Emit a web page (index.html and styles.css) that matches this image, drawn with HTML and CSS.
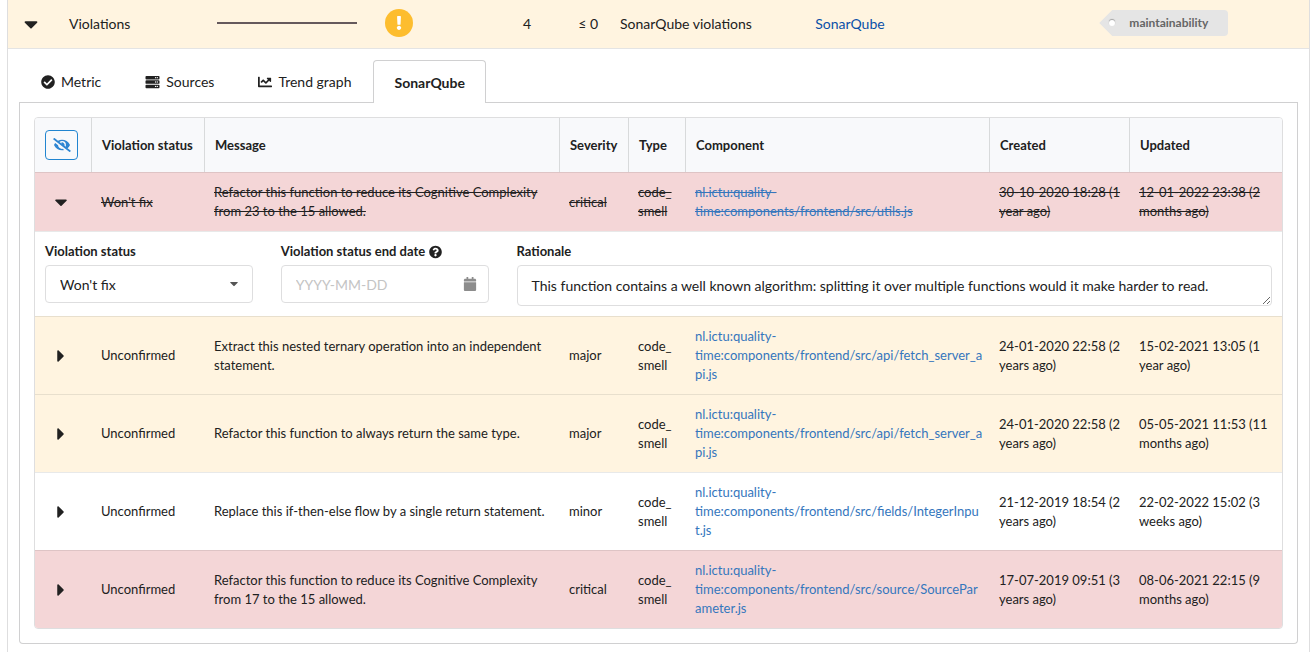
FILE: index.html
```
<!DOCTYPE html>
<html lang="en">

<head>
    <meta charset="UTF-8" />
    <meta name="viewport" content="width=device-width, initial-scale=1.0" />
    <title>Violations - SonarQube</title>
    <link rel="stylesheet" href="styles.css">
</head>

<body>
    <!-- Icon shapes, referenced with <use> below -->
    <svg class="sprite" aria-hidden="true">
        <symbol id="caret-down" viewBox="0 0 320 512"><path d="M31.3 192h257.3c17.8 0 26.7 21.5 14.1 34.1L174.1 354.8c-7.8 7.8-20.5 7.8-28.3 0L17.2 226.1C4.6 213.5 13.5 192 31.3 192z" /></symbol>
        <symbol id="caret-right" viewBox="0 0 192 512"><path d="M0 384.662V127.338c0-17.818 21.543-26.741 33.941-14.142l128.322 128.662c7.81 7.81 7.81 20.474 0 28.284L33.941 398.804C21.543 411.404 0 402.48 0 384.662z" /></symbol>
        <symbol id="check-circle" viewBox="0 0 512 512"><path d="M504 256c0 136.967-111.033 248-248 248S8 392.967 8 256 119.033 8 256 8s248 111.033 248 248zM227.314 387.314l184-184c6.248-6.248 6.248-16.379 0-22.627l-22.627-22.627c-6.248-6.249-16.379-6.249-22.628 0L216 308.118l-70.059-70.059c-6.248-6.248-16.379-6.248-22.628 0l-22.627 22.627c-6.248 6.248-6.248 16.379 0 22.627l104 104c6.249 6.249 16.379 6.249 22.628.001z" /></symbol>
        <symbol id="server" viewBox="0 0 512 512">
            <path fill-rule="evenodd" d="M32 32h448a32 32 0 0 1 32 32v64a32 32 0 0 1-32 32H32a32 32 0 0 1-32-32V64a32 32 0 0 1 32-32zM432 72a24 24 0 1 0 0 48 24 24 0 0 0 0-48zM368 72a24 24 0 1 0 0 48 24 24 0 0 0 0-48z" />
            <path fill-rule="evenodd" d="M32 192h448a32 32 0 0 1 32 32v64a32 32 0 0 1-32 32H32a32 32 0 0 1-32-32v-64a32 32 0 0 1 32-32zM432 232a24 24 0 1 0 0 48 24 24 0 0 0 0-48zM368 232a24 24 0 1 0 0 48 24 24 0 0 0 0-48z" />
            <path fill-rule="evenodd" d="M32 352h448a32 32 0 0 1 32 32v64a32 32 0 0 1-32 32H32a32 32 0 0 1-32-32v-64a32 32 0 0 1 32-32zM432 392a24 24 0 1 0 0 48 24 24 0 0 0 0-48zM368 392a24 24 0 1 0 0 48 24 24 0 0 0 0-48z" />
        </symbol>
        <symbol id="chart-line" viewBox="0 0 512 512"><path d="M496 384H64V80c0-8.84-7.16-16-16-16H16C7.16 64 0 71.16 0 80v336c0 17.67 14.33 32 32 32h464c8.84 0 16-7.16 16-16v-32c0-8.84-7.16-16-16-16zM464 96H345.94c-21.38 0-32.09 25.85-16.97 40.97l32.4 32.4L288 242.75l-73.37-73.37c-12.5-12.5-32.76-12.5-45.25 0l-68.69 68.69c-6.25 6.25-6.25 16.38 0 22.63l22.62 22.62c6.25 6.25 16.38 6.25 22.63 0L192 237.25l73.37 73.37c12.5 12.5 32.76 12.5 45.25 0l96-96 32.4 32.4c15.12 15.12 40.97 4.41 40.97-16.97V112c.01-8.84-7.15-16-15.99-16z" /></symbol>
        <symbol id="eye-slash" viewBox="0 0 640 512"><path d="M320 400c-75.85 0-137.25-58.71-142.9-133.11L72.2 185.82c-13.79 17.3-26.48 35.59-36.72 55.59a32.35 32.35 0 0 0 0 29.19C89.71 376.41 197.07 448 320 448c26.91 0 52.87-4 77.89-10.46L346 397.39a144.13 144.13 0 0 1-26 2.61zm313.82 58.1l-110.55-85.44a331.25 331.25 0 0 0 81.25-102.07 32.35 32.35 0 0 0 0-29.19C550.29 135.59 442.93 64 320 64a308.15 308.15 0 0 0-147.32 37.7L45.46 3.37A16 16 0 0 0 23 6.18L3.37 31.45A16 16 0 0 0 6.18 53.9l588.36 454.73a16 16 0 0 0 22.46-2.81l19.64-25.27a16 16 0 0 0-2.82-22.45zm-183.72-142l-39.3-30.38A94.75 94.75 0 0 0 416 256a94.76 94.76 0 0 0-121.31-92.21A47.65 47.65 0 0 1 304 192a46.64 46.64 0 0 1-1.54 10l-73.61-56.89A142.31 142.31 0 0 1 320 112a143.92 143.92 0 0 1 144 144c0 21.63-5.29 41.79-13.9 60.11z" /></symbol>
        <symbol id="question-circle" viewBox="0 0 512 512"><path d="M504 256c0 136.997-111.043 248-248 248S8 392.997 8 256C8 119.083 119.043 8 256 8s248 111.083 248 248zM262.655 90c-54.497 0-89.255 22.957-116.549 63.758-3.536 5.286-2.353 12.415 2.715 16.258l34.699 26.31c5.205 3.947 12.621 3.008 16.665-2.122 17.864-22.658 30.113-35.797 57.303-35.797 20.429 0 45.698 13.148 45.698 32.958 0 14.976-12.363 22.667-32.534 33.976C247.128 238.528 216 254.941 216 296v4c0 6.627 5.373 12 12 12h56c6.627 0 12-5.373 12-12v-1.333c0-28.462 83.186-29.647 83.186-106.667 0-58.002-60.165-102-116.531-102zM256 338c-25.365 0-46 20.635-46 46 0 25.364 20.635 46 46 46s46-20.636 46-46c0-25.365-20.635-46-46-46z" /></symbol>
        <symbol id="calendar" viewBox="0 0 448 512"><path d="M12 192h424c6.6 0 12 5.4 12 12v260c0 26.5-21.5 48-48 48H48c-26.5 0-48-21.5-48-48V204c0-6.6 5.4-12 12-12zm436-44v-36c0-26.5-21.5-48-48-48h-48V12c0-6.6-5.4-12-12-12h-40c-6.6 0-12 5.4-12 12v52H160V12c0-6.6-5.4-12-12-12h-40c-6.6 0-12 5.4-12 12v52H48C21.5 64 0 85.5 0 112v36c0 6.6 5.4 12 12 12h424c6.6 0 12-5.4 12-12z" /></symbol>
        <symbol id="exclamation" viewBox="0 0 192 512"><path d="M176 432c0 44.112-35.888 80-80 80s-80-35.888-80-80 35.888-80 80-80 80 35.888 80 80zM25.26 25.199l13.6 272C39.499 309.972 50.041 320 62.83 320h66.34c12.789 0 23.331-10.028 23.97-22.801l13.6-272C167.425 11.49 156.496 0 142.77 0H49.23C35.504 0 24.575 11.49 25.26 25.199z" /></symbol>
    </svg>

    <div class="subject">
        <table class="metrics">
            <colgroup>
                <col class="m-toggle">
                <col class="m-name">
                <col class="m-trend">
                <col class="m-status">
                <col class="m-value">
                <col class="m-target">
                <col class="m-unit">
                <col class="m-source">
                <col>
            </colgroup>
            <tbody>
                <tr class="warning">
                    <td class="toggle-cell"><button class="toggle" aria-label="Collapse metric" aria-expanded="true"><svg class="icon caret-lg"><use href="#caret-down" /></svg></button></td>
                    <td>Violations</td>
                    <td><svg class="sparkline"><line x1="0" y1="1" x2="100%" y2="1" /></svg></td>
                    <td class="status-cell"><span class="status"><svg class="status-icon"><use href="#exclamation" /></svg></span></td>
                    <td class="number">4</td>
                    <td class="number">≤ 0</td>
                    <td>SonarQube violations</td>
                    <td><a class="source-link" href="#">SonarQube</a></td>
                    <td><span class="tag">maintainability</span></td>
                </tr>
            </tbody>
        </table>

        <div class="details">
            <div class="tabs" role="tablist">
                <button class="tab" role="tab"><svg class="icon"><use href="#check-circle" /></svg>Metric</button>
                <button class="tab" role="tab"><svg class="icon icon-wide"><use href="#server" /></svg>Sources</button>
                <button class="tab" role="tab"><svg class="icon"><use href="#chart-line" /></svg>Trend graph</button>
                <button class="tab active" role="tab" aria-selected="true">SonarQube</button>
            </div>

            <div class="tab-panel" role="tabpanel">
                <table class="entities">
                    <colgroup>
                        <col class="e-toggle">
                        <col class="e-status">
                        <col class="e-message">
                        <col class="e-severity">
                        <col class="e-type">
                        <col class="e-component">
                        <col class="e-created">
                        <col>
                    </colgroup>
                    <thead>
                        <tr>
                            <th><button class="hide-button" aria-label="Hide ignored violations"><svg class="icon eye"><use href="#eye-slash" /></svg></button></th>
                            <th>Violation status</th>
                            <th>Message</th>
                            <th>Severity</th>
                            <th>Type</th>
                            <th>Component</th>
                            <th>Created</th>
                            <th>Updated</th>
                        </tr>
                    </thead>
                    <tbody>
                        <tr class="negative ignored">
                            <td class="toggle-cell"><button class="toggle" aria-label="Collapse" aria-expanded="true"><svg class="icon caret"><use href="#caret-down" /></svg></button></td>
                            <td>Won't fix</td>
                            <td>Refactor this function to reduce its Cognitive Complexity from 23 to the 15 allowed.</td>
                            <td>critical</td>
                            <td>code_<wbr>smell</td>
                            <td><a href="#">nl.ictu:quality-time:components/frontend/src/utils.js</a></td>
                            <td>30-10-2020 18:28 (1 year ago)</td>
                            <td>12-01-2022 23:38 (2 months ago)</td>
                        </tr>
                        <tr>
                            <td class="form-cell" colspan="8">
                                <form class="entity-form">
                                    <div class="field">
                                        <label for="status">Violation status</label>
                                        <div class="control">
                                            <select id="status">
                                                <option>Won't fix</option>
                                                <option>Unconfirmed</option>
                                            </select>
                                            <svg class="icon select-caret"><use href="#caret-down" /></svg>
                                        </div>
                                    </div>
                                    <div class="field">
                                        <label for="end-date">Violation status end date <svg class="icon help"><use href="#question-circle" /></svg></label>
                                        <div class="control">
                                            <input type="text" id="end-date" placeholder="YYYY-MM-DD" autocomplete="off" />
                                            <svg class="icon calendar"><use href="#calendar" /></svg>
                                        </div>
                                    </div>
                                    <div class="field">
                                        <label for="rationale">Rationale</label>
                                        <textarea id="rationale" rows="1">This function contains a well known algorithm: splitting it over multiple functions would it make harder to read.</textarea>
                                    </div>
                                </form>
                            </td>
                        </tr>
                        <tr class="warning">
                            <td class="toggle-cell"><button class="toggle" aria-label="Expand" aria-expanded="false"><svg class="icon caret"><use href="#caret-right" /></svg></button></td>
                            <td>Unconfirmed</td>
                            <td>Extract this nested ternary operation into an independent statement.</td>
                            <td>major</td>
                            <td>code_<wbr>smell</td>
                            <td><a href="#">nl.ictu:quality-time:components/frontend/src/api/fetch_server_api.js</a></td>
                            <td>24-01-2020 22:58 (2 years ago)</td>
                            <td>15-02-2021 13:05 (1 year ago)</td>
                        </tr>
                        <tr class="warning">
                            <td class="toggle-cell"><button class="toggle" aria-label="Expand" aria-expanded="false"><svg class="icon caret"><use href="#caret-right" /></svg></button></td>
                            <td>Unconfirmed</td>
                            <td>Refactor this function to always return the same type.</td>
                            <td>major</td>
                            <td>code_<wbr>smell</td>
                            <td><a href="#">nl.ictu:quality-time:components/frontend/src/api/fetch_server_api.js</a></td>
                            <td>24-01-2020 22:58 (2 years ago)</td>
                            <td>05-05-2021 11:53 (11 months ago)</td>
                        </tr>
                        <tr>
                            <td class="toggle-cell"><button class="toggle" aria-label="Expand" aria-expanded="false"><svg class="icon caret"><use href="#caret-right" /></svg></button></td>
                            <td>Unconfirmed</td>
                            <td>Replace this if-then-else flow by a single return statement.</td>
                            <td>minor</td>
                            <td>code_<wbr>smell</td>
                            <td><a href="#">nl.ictu:quality-time:components/frontend/src/fields/IntegerInput.js</a></td>
                            <td>21-12-2019 18:54 (2 years ago)</td>
                            <td>22-02-2022 15:02 (3 weeks ago)</td>
                        </tr>
                        <tr class="negative">
                            <td class="toggle-cell"><button class="toggle" aria-label="Expand" aria-expanded="false"><svg class="icon caret"><use href="#caret-right" /></svg></button></td>
                            <td>Unconfirmed</td>
                            <td>Refactor this function to reduce its Cognitive Complexity from 17 to the 15 allowed.</td>
                            <td>critical</td>
                            <td>code_<wbr>smell</td>
                            <td><a href="#">nl.ictu:quality-time:components/frontend/src/source/SourceParameter.js</a></td>
                            <td>17-07-2019 09:51 (3 years ago)</td>
                            <td>08-06-2021 22:15 (9 months ago)</td>
                        </tr>
                    </tbody>
                </table>
            </div>
        </div>
    </div>
</body>

</html>
```
FILE: styles.css
```
* {
    box-sizing: border-box;
}

body {
    margin: 0;
    font-family: Lato, "Liberation Sans", sans-serif;
    font-size: 14px;
    line-height: 19px;
    color: #212121;
    background: #fff;
}

button,
input,
select,
textarea {
    font: inherit;
    color: inherit;
}

a {
    color: #3576bd;
    text-decoration: none;
}

table {
    width: 100%;
    table-layout: fixed;
    border-spacing: 0;
}

td,
th {
    text-align: left;
}

.sprite {
    position: absolute;
    width: 0;
    height: 0;
}

.icon {
    width: 14px;
    height: 14px;
    fill: currentColor;
}

.subject {
    margin: 0 5px 0 7px;
    border: 1px solid #dededf;
    border-width: 0 1px;
}

.warning {
    background: #fff4e0;
}

.negative {
    background: #f4d6d7;
}

/* Metric row */
.metrics td {
    height: 49px;
    padding: 0 11px 2px;
    border-bottom: 1px solid #e4e4e4;
}

.m-toggle { width: 50px; }
.m-name { width: 148px; }
.m-trend { width: 162px; }
.m-status { width: 62px; }
.m-value { width: 112px; }
.m-target { width: 67px; }
.m-unit { width: 15%; }
.m-source { width: 22%; }

.toggle {
    display: inline-flex;
    padding: 0;
    border: 0;
    background: none;
    vertical-align: middle;
    cursor: pointer;
}

.metrics .toggle-cell,
.entities .toggle-cell {
    padding: 0 4px 0 0;
    text-align: center;
}

.caret {
    width: 20px;
    height: 20px;
}

.caret-lg {
    width: 22px;
    height: 22px;
}

.sparkline {
    display: block;
    width: 100%;
    height: 2px;
    stroke: #65595c;
    stroke-width: 2;
}

.metrics .status-cell {
    padding: 0 0 2px;
    text-align: center;
}

.status {
    display: inline-flex;
    align-items: center;
    justify-content: center;
    width: 28px;
    height: 28px;
    border-radius: 50%;
    background: #fdbd2e;
    vertical-align: middle;
}

.status-icon {
    width: 14px;
    height: 14px;
    fill: #fff;
}

.number {
    text-align: right;
}

.source-link {
    color: #0a50a8;
}

.tag {
    position: relative;
    display: inline-block;
    margin-left: 11px;
    padding: 4px 20px 4px 17px;
    border-radius: 0 4px 4px 0;
    background: #e5e5e5;
    color: #666;
    font-size: 12px;
    font-weight: bold;
    line-height: 18px;
    vertical-align: middle;
}

/* the pointed end of the tag */
.tag::before {
    content: "";
    position: absolute;
    top: 4px;
    left: -9px;
    width: 18px;
    height: 18px;
    background: inherit;
    transform: rotate(45deg);
}

.tag::after {
    content: "";
    position: absolute;
    top: 10px;
    left: -3px;
    width: 6px;
    height: 6px;
    border-radius: 50%;
    background: #fff;
    box-shadow: 0 -1px 1px rgba(0, 0, 0, 0.3);
}

/* Tabs */
.details {
    padding: 11px;
}

.tabs {
    display: flex;
    border-bottom: 1px solid #d0d0d1;
}

.tab {
    display: flex;
    align-items: center;
    gap: 6px;
    height: 43px;
    margin-bottom: -1px;
    padding: 0 21px;
    border: 1px solid transparent;
    background: none;
    cursor: pointer;
}

.icon-wide {
    width: 15px;
}

.tab.active {
    padding: 0 20px;
    border-color: #d0d0d1;
    border-bottom: 0;
    border-radius: 4px 4px 0 0;
    background: #fff;
    font-weight: bold;
}

.tab-panel {
    padding: 14px;
    border: 1px solid #d0d0d1;
    border-top: 0;
    border-radius: 0 0 4px 4px;
}

/* Violations table */
.entities {
    border: 1px solid #dededf;
    border-radius: 4px;
    overflow: hidden;
    font-size: 13px;
}

.e-toggle { width: 56px; }
.e-status { width: 113px; }
.e-message { width: 355px; }
.e-severity { width: 69px; }
.e-type { width: 57px; }
.e-component { width: 304px; }
.e-created { width: 140px; }

.entities th {
    padding: 12px 9px 12px 10px;
    border-left: 1px solid #d8dadb;
    background: #f8f9fb;
    white-space: nowrap;
}

.entities th:first-child {
    border-left: 0;
}

.entities td {
    padding: 10px 6px 10px 10px;
    border-top: 1px solid rgba(34, 36, 38, 0.1);
    overflow-wrap: anywhere;
}

.entities .form-cell {
    padding: 10px;
}

.ignored td,
.ignored a {
    text-decoration: line-through;
}

.hide-button {
    display: flex;
    align-items: center;
    justify-content: center;
    width: 33px;
    height: 30px;
    padding: 0;
    border: 1px solid #2185d0;
    border-radius: 4px;
    background: none;
    color: #2f86d2;
    cursor: pointer;
}

.eye {
    width: 18px;
}

/* Edit form of an expanded violation */
.entity-form {
    display: grid;
    grid-template-columns: 11fr 11fr 40fr;
    align-items: start;
    gap: 28px;
}

.field label {
    display: flex;
    align-items: center;
    gap: 4px;
    margin-bottom: 4px;
    font-weight: bold;
}

.help {
    width: 13px;
}

.control {
    position: relative;
}

.field input,
.field select,
.field textarea {
    display: block;
    width: 100%;
    height: 38px;
    padding: 0 14px;
    border: 1px solid #dededf;
    border-radius: 4px;
    background: #fff;
    font-size: 14px;
}

.field select {
    appearance: none;
}

.field input::placeholder {
    color: #c4c4c4;
}

.field textarea {
    height: 41px;
    padding: 10px 14px;
    resize: vertical;
}

.select-caret {
    position: absolute;
    top: 12px;
    right: 12px;
    height: 13px;
    color: #555;
    pointer-events: none;
}

.calendar {
    position: absolute;
    top: 12px;
    right: 12px;
    color: #8c8c8c;
}
```
